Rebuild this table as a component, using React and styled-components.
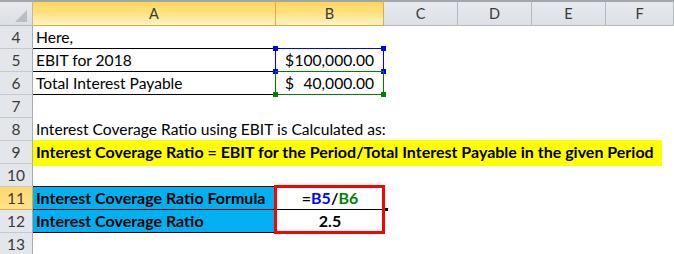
import React from 'react'
import styled, { createGlobalStyle } from 'styled-components'

const GlobalStyle = createGlobalStyle`
  html, body {
    margin: 0;
    padding: 0;
    background: #fff;
  }
  body {
    font-family: Lato, "Open Sans", sans-serif;
  }
`;

const COLS = ['A', 'B', 'C', 'D', 'E', 'F'];
const ROWS = [4, 5, 6, 7, 8, 9, 10, 11, 12, 13];
const ACTIVE_COLS = ['A', 'B'];
const ACTIVE_ROW = 11;
const BLACK = '#000';
const SKY = '#00b0f0';

// what is in each cell (b = bottom line colour)
const CELLS = {
    A4: { text: 'Here,', b: BLACK },
    B4: { b: BLACK },
    A5: { text: 'EBIT for 2018', b: BLACK },
    B5: { money: ['$', '100,000.00'], b: BLACK },
    A6: { text: 'Total Interest Payable', b: BLACK },
    B6: { money: ['$', '40,000.00'], b: BLACK },
    A8: { text: 'Interest Coverage Ratio using EBIT is Calculated as:' },
    A10: { b: BLACK },
    B10: { b: BLACK },
    A11: { text: 'Interest Coverage Ratio Formula', bold: true, bg: SKY, b: BLACK },
    B11: { formula: true, bold: true, center: true, b: BLACK },
    A12: { text: 'Interest Coverage Ratio', bold: true, bg: SKY, b: BLACK },
    B12: { text: '2.5', bold: true, center: true, b: BLACK },
};

// sheet row 4 sits on grid row 2, column A on grid column 2
const gridRow = (r) => r - 2;
const gridCol = (c) => COLS.indexOf(c) + 2;

function renderCell(col, row) {
    const key = col + row;
    const c = CELLS[key] || {};
    let content = c.text || null;
    if (c.money) {
        content = (
            <>
                <span>{c.money[0]}</span>
                <span>{c.money[1]}</span>
            </>
        );
    }
    if (c.formula) {
        content = (
            <span>
                =<Ref $color="#0000ff">B5</Ref>/<Ref $color="#008000">B6</Ref>
            </span>
        );
    }
    return (
        <Cell
            key={key}
            $row={gridRow(row)}
            $col={gridCol(col)}
            $b={c.b}
            $bg={c.bg}
            $bold={c.bold}
            $align={c.money ? 'between' : c.center ? 'center' : 'start'}
            $money={!!c.money}
        >
            {content}
        </Cell>
    );
}

function App() {
    return (
        <>
            <GlobalStyle />
            <Sheet>
                <Corner />
                {COLS.map((c) => (
                    <ColHead key={c} $col={gridCol(c)} $active={ACTIVE_COLS.includes(c)}>{c}</ColHead>
                ))}
                {ROWS.map((r) => (
                    <React.Fragment key={r}>
                        <RowHead $row={gridRow(r)} $active={r === ACTIVE_ROW}>{r}</RowHead>
                        {r === 9 ? (
                            <WideCell $row={gridRow(r)}>
                                <Highlight>
                                    Interest Coverage Ratio = EBIT for the Period/Total Interest Payable in the given Period
                                </Highlight>
                            </WideCell>
                        ) : (
                            COLS.map((c) => renderCell(c, r))
                        )}
                    </React.Fragment>
                ))}
                <RefBox $row={gridRow(5)} $color="#0000ff">
                    <Handle $color="#0000ff" $top />
                    <Handle $color="#0000ff" $top $right />
                    <Handle $color="#0000ff" />
                    <Handle $color="#0000ff" $right />
                </RefBox>
                <RefBox $row={gridRow(6)} $color="#008000">
                    <Handle $color="#008000" />
                    <Handle $color="#008000" $right />
                </RefBox>
                <RedBox $row={gridRow(11)}>
                    <FillHandle />
                </RedBox>
            </Sheet>
        </>
    );
}

const Sheet = styled.div`
    display: grid;
    grid-template-columns: 33px 243px 108px 74px 74px 74px 68px;
    grid-template-rows: 26px repeat(10, 23px);
    width: 674px;
    height: 254px;
    overflow: hidden;
    background: #fff;
`;

const headBase = `
    box-sizing: border-box;
    display: flex;
    align-items: center;
    justify-content: center;
    font-family: Lato, "Open Sans", sans-serif;
    font-size: 14.5px;
    line-height: 18px;
`;

const Corner = styled.div`
    ${headBase}
    grid-row: 1;
    grid-column: 1;
    position: relative;
    background: linear-gradient(#e7e9ed, #dcdfe4);
    border-top: 2px solid #a2a6ab;
    border-right: 1px solid #b4b9bf;
    border-bottom: 1px solid #b4b9bf;

    &::after {
        content: '';
        position: absolute;
        right: 5px;
        bottom: 3px;
        width: 12px;
        height: 12px;
        background: #b9bec4;
        clip-path: polygon(100% 0, 100% 100%, 0 100%);
    }
`;

const ColHead = styled.div`
    ${headBase}
    grid-row: 1;
    grid-column: ${(p) => p.$col};
    color: #3a3a3a;
    border-top: 2px solid #a2a6ab;
    border-right: 1px solid ${(p) => (p.$active ? '#e3ac4a' : '#b4b9bf')};
    border-bottom: 1px solid ${(p) => (p.$active ? '#e3a83c' : '#b4b9bf')};
    background: ${(p) =>
        p.$active
            ? 'linear-gradient(#ffd65c, #ffe48a 55%, #fff3c6)'
            : 'linear-gradient(#e6e9ed, #dde0e5)'};
`;

const RowHead = styled.div`
    ${headBase}
    grid-row: ${(p) => p.$row};
    grid-column: 1;
    align-items: flex-end;
    padding-bottom: 2px;
    font-size: 15.5px;
    color: #3a3a3a;
    border-right: 1px solid ${(p) => (p.$active ? '#e3ac4a' : '#a6acb3')};
    border-bottom: 1px solid ${(p) => (p.$active ? '#e3ac4a' : '#c6cad0')};
    background: ${(p) => (p.$active ? 'linear-gradient(#ffd86a, #ffe28c)' : '#e3e6ea')};
`;

const Cell = styled.div`
    grid-row: ${(p) => p.$row};
    grid-column: ${(p) => p.$col};
    box-sizing: border-box;
    min-width: 0;
    display: flex;
    align-items: flex-end;
    justify-content: ${(p) =>
        p.$align === 'center' ? 'center' : p.$align === 'between' ? 'space-between' : 'flex-start'};
    padding: ${(p) => (p.$money ? '0 10px 2px 9px' : '0 3px 2px')};
    border-bottom: 1px solid ${(p) => p.$b || 'transparent'};
    background: ${(p) => p.$bg || 'transparent'};
    color: #000;
    font-family: Lato, "Open Sans", sans-serif;
    font-size: ${(p) => (p.$bold ? '16px' : '15.6px')};
    line-height: 18px;
    font-weight: ${(p) => (p.$bold ? 700 : 400)};
    white-space: nowrap;
    overflow: visible;
`;

const WideCell = styled.div`
    grid-row: ${(p) => p.$row};
    grid-column: 2 / span 6;
    display: flex;
    align-items: flex-start;
`;

const Highlight = styled.div`
    box-sizing: border-box;
    flex: none;
    width: 629px;
    height: 26px;
    margin-top: -1px;
    display: flex;
    align-items: flex-end;
    padding: 0 3px 5px;
    background: #ffff00;
    color: #000;
    font-family: Lato, "Open Sans", sans-serif;
    font-size: 16px;
    line-height: 18px;
    font-weight: 700;
    white-space: nowrap;
`;

const Ref = styled.span`
    color: ${(p) => p.$color};
`;

const RefBox = styled.div`
    grid-row: ${(p) => p.$row};
    grid-column: 3;
    position: relative;
    box-sizing: border-box;
    margin: -1px 0 0 -1px;
    border: 1px solid ${(p) => p.$color};
    pointer-events: none;
`;

const Handle = styled.span`
    position: absolute;
    width: 5px;
    height: 5px;
    background: ${(p) => p.$color};
    ${(p) => (p.$top ? 'top: -3px;' : 'bottom: -3px;')}
    ${(p) => (p.$right ? 'right: -3px;' : 'left: -3px;')}
`;

const RedBox = styled.div`
    grid-row: ${(p) => p.$row} / span 2;
    grid-column: 3;
    position: relative;
    box-sizing: border-box;
    margin: -2px -1px -1px -2px;
    border: 3px solid #ff0000;
    pointer-events: none;
`;

const FillHandle = styled.span`
    position: absolute;
    right: -6px;
    top: 20px;
    width: 3px;
    height: 3px;
    background: #000;
`;

export default App
